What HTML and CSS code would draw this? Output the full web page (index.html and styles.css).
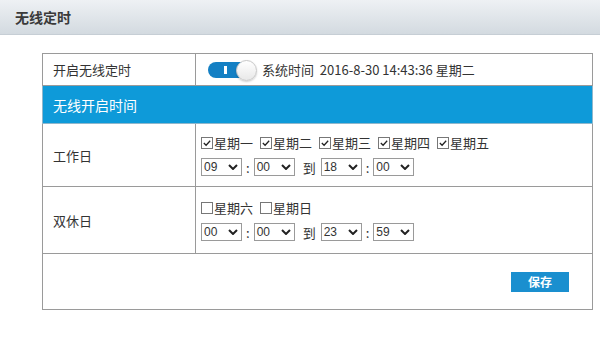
FILE: index.html
```html
<!DOCTYPE html>
<html lang="zh-CN">
<head>
  <meta charset="UTF-8" />
  <title>无线定时</title>
  <link rel="stylesheet" href="styles.css">
</head>
<body>

  <!-- page title bar -->
  <div class="title-bar">无线定时</div>

  <div class="content">
    <table class="grid">
      <tr class="row-switch">
        <td class="label">开启无线定时</td>
        <td>
          <div class="line">
            <span class="toggle"><span class="bar"></span><span class="knob"></span></span>
            <span class="sys">系统时间&nbsp; 2016-8-30 14:43:36 星期二</span>
          </div>
        </td>
      </tr>
      <tr class="row-head">
        <td colspan="2">无线开启时间</td>
      </tr>
      <tr class="row-work">
        <td class="label">工作日</td>
        <td>
          <div class="days">
            <span class="day"><span class="cb on"><svg viewBox="0 0 11 11"><path d="M2 5.5 L4.5 8 L9 3" /></svg></span>星期一</span>
            <span class="day"><span class="cb on"><svg viewBox="0 0 11 11"><path d="M2 5.5 L4.5 8 L9 3" /></svg></span>星期二</span>
            <span class="day"><span class="cb on"><svg viewBox="0 0 11 11"><path d="M2 5.5 L4.5 8 L9 3" /></svg></span>星期三</span>
            <span class="day"><span class="cb on"><svg viewBox="0 0 11 11"><path d="M2 5.5 L4.5 8 L9 3" /></svg></span>星期四</span>
            <span class="day"><span class="cb on"><svg viewBox="0 0 11 11"><path d="M2 5.5 L4.5 8 L9 3" /></svg></span>星期五</span>
          </div>
          <div class="times">
            <span class="sel">09<svg viewBox="0 0 10 6"><path d="M1 1 L5 5 L9 1" /></svg></span>
            <span class="colon">:</span>
            <span class="sel">00<svg viewBox="0 0 10 6"><path d="M1 1 L5 5 L9 1" /></svg></span>
            <span class="to">到</span>
            <span class="sel">18<svg viewBox="0 0 10 6"><path d="M1 1 L5 5 L9 1" /></svg></span>
            <span class="colon">:</span>
            <span class="sel">00<svg viewBox="0 0 10 6"><path d="M1 1 L5 5 L9 1" /></svg></span>
          </div>
        </td>
      </tr>
      <tr class="row-rest">
        <td class="label">双休日</td>
        <td>
          <div class="days">
            <span class="day"><span class="cb"></span>星期六</span>
            <span class="day"><span class="cb"></span>星期日</span>
          </div>
          <div class="times">
            <span class="sel">00<svg viewBox="0 0 10 6"><path d="M1 1 L5 5 L9 1" /></svg></span>
            <span class="colon">:</span>
            <span class="sel">00<svg viewBox="0 0 10 6"><path d="M1 1 L5 5 L9 1" /></svg></span>
            <span class="to">到</span>
            <span class="sel">23<svg viewBox="0 0 10 6"><path d="M1 1 L5 5 L9 1" /></svg></span>
            <span class="colon">:</span>
            <span class="sel">59<svg viewBox="0 0 10 6"><path d="M1 1 L5 5 L9 1" /></svg></span>
          </div>
        </td>
      </tr>
      <tr class="row-save">
        <td colspan="2">
          <div class="actions">
            <button class="save-btn">保存</button>
          </div>
        </td>
      </tr>
    </table>
  </div>

</body>
</html>
```

FILE: styles.css
```css
body {
  margin: 0;
  font-family: "Noto Sans CJK SC", "Liberation Sans", sans-serif;
  font-size: 13px;
  color: #333;
  background: #fff;
  height: 344px;
  overflow: hidden;
}

.title-bar {
  height: 35px;
  line-height: 35px;
  padding-left: 15px;
  font-size: 14px;
  font-weight: bold;
  color: #3a3a3a;
  background: linear-gradient(#eef1f4, #d3dae0);
  border-bottom: 1px solid #c6ced5;
  box-sizing: border-box;
}

.content {
  padding: 18px 0 0 42px;
}

.grid {
  width: 551px;
  border-collapse: collapse;
  border: 1px solid #8c8c8c;
}

.grid td {
  border: 1px solid #9a9a9a;
  padding: 0 0 0 5px;
  vertical-align: middle;
}

.grid td.label {
  width: 142px;
  padding-left: 10px;
}

.row-switch td {
  height: 31px;
}

.line {
  display: flex;
  align-items: center;
  gap: 4px;
  padding-left: 7px;
}

.toggle {
  position: relative;
  width: 50px;
  height: 18px;
  display: inline-block;
}

.toggle .bar {
  position: absolute;
  left: 0;
  top: 1px;
  width: 42px;
  height: 16px;
  border-radius: 8px;
  background: #1480c4;
}

.toggle .bar::after {
  content: "";
  position: absolute;
  left: 16px;
  top: 4px;
  width: 3px;
  height: 8px;
  background: #fff;
}

.toggle .knob {
  position: absolute;
  left: 28px;
  top: -1px;
  width: 19px;
  height: 19px;
  border-radius: 50%;
  background: linear-gradient(#fff, #e8e8e8);
  border: 1px solid #c8c8c8;
  box-shadow: 0 1px 2px rgba(0,0,0,.2);
}

.sys {
  font-size: 13px;
  color: #333;
}

.row-head td {
  height: 37px;
  background: #0e9ad9;
  color: #fff;
  font-size: 14px;
  padding-left: 10px;
  border-color: #8fb7cc;
}

.row-work td {
  height: 62px;
}

.row-rest td {
  height: 66px;
}

.days {
  display: flex;
  gap: 7px;
}

.day {
  display: flex;
  align-items: center;
  line-height: 18px;
}

.cb {
  width: 10px;
  height: 10px;
  border: 1px solid #777;
  background: #fff;
  display: inline-block;
  margin-right: 1px;
}

.cb svg {
  display: block;
  width: 10px;
  height: 10px;
}

.cb svg path {
  fill: none;
  stroke: #222;
  stroke-width: 1.4;
}

.times {
  display: flex;
  align-items: center;
  margin-top: 6px;
}

.sel {
  width: 41px;
  height: 18px;
  border: 1px solid #9a9a9a;
  display: inline-flex;
  align-items: center;
  justify-content: space-between;
  padding: 0 3px 0 2px;
  box-sizing: border-box;
  font-size: 12px;
  color: #333;
  font-family: "Liberation Sans", sans-serif;
}

.sel svg {
  width: 10px;
  height: 6px;
}

.sel svg path {
  fill: none;
  stroke: #222;
  stroke-width: 2;
}

.colon {
  margin: 0 4px;
}

.to {
  margin: 0 5px 0 8px;
}

.row-save td {
  height: 55px;
}

.actions {
  display: flex;
  justify-content: flex-end;
  padding-right: 23px;
}

.save-btn {
  width: 58px;
  height: 20px;
  border: none;
  background: #1a8fcf;
  color: #fff;
  font-family: "Noto Sans CJK SC", sans-serif;
  font-size: 12px;
  font-weight: bold;
  padding: 0;
  cursor: pointer;
}
```
